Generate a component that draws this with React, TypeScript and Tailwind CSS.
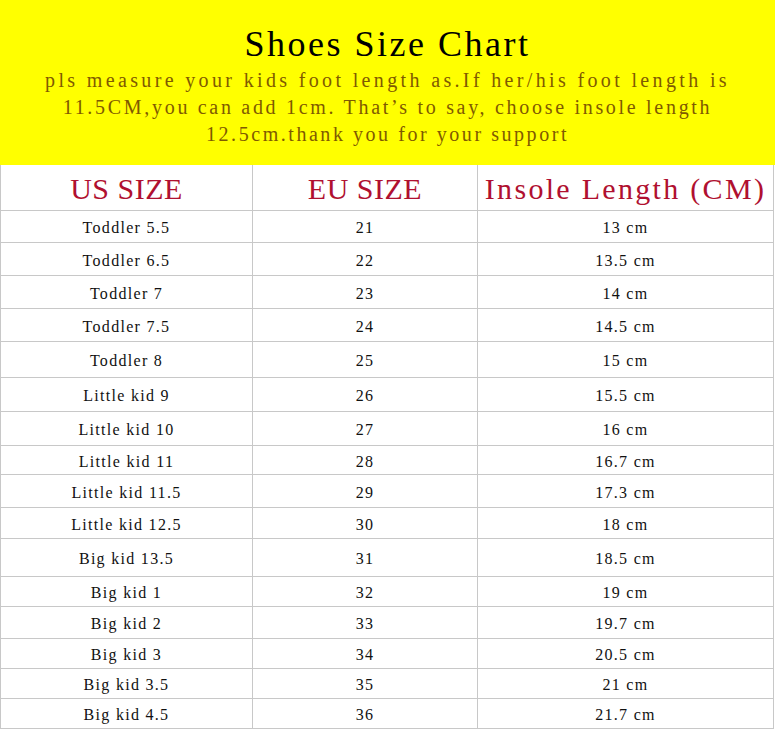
const rows: [string, string, string, number][] = [
  ['Toddler 5.5', '21', '13 cm', 32],
  ['Toddler 6.5', '22', '13.5 cm', 33],
  ['Toddler 7', '23', '14 cm', 33],
  ['Toddler 7.5', '24', '14.5 cm', 33],
  ['Toddler 8', '25', '15 cm', 36],
  ['Little kid 9', '26', '15.5 cm', 34],
  ['Little kid 10', '27', '16 cm', 34],
  ['Little kid 11', '28', '16.7 cm', 29],
  ['Little kid 11.5', '29', '17.3 cm', 33],
  ['Little kid 12.5', '30', '18 cm', 31],
  ['Big kid 13.5', '31', '18.5 cm', 38],
  ['Big kid 1', '32', '19 cm', 30],
  ['Big kid 2', '33', '19.7 cm', 32],
  ['Big kid 3', '34', '20.5 cm', 30],
  ['Big kid 3.5', '35', '21 cm', 30],
  ['Big kid 4.5', '36', '21.7 cm', 30],
];

const serif = "font-['Liberation_Serif',serif]";

export default function App() {
  return (
    <main className={`w-[775px] min-h-[731px] bg-white ${serif}`}>
      <header className="flex h-[165px] flex-col items-center bg-[#ffff00] pt-[24px]">
        <h1 className="text-[36px] leading-[40px] tracking-[2.5px] text-black">Shoes Size Chart</h1>
        <div className="mt-[3px] flex flex-col items-center text-[20px] leading-[27px] text-[#7f5a00] whitespace-nowrap">
          <p className="tracking-[3.35px]">pls measure your kids foot length as.If her/his foot length is</p>
          <p className="tracking-[2.7px]">11.5CM,you can add 1cm. That’s to say, choose insole length</p>
          <p className="tracking-[2.55px]">12.5cm.thank you for your support</p>
        </div>
      </header>

      <div className="grid w-[774px] grid-cols-[252px_225px_296px] border-l border-[#c8c8c8] text-[#b01030]">
        <div className="flex h-[46px] items-center justify-center border-r border-b border-[#c8c8c8] pt-[2px] text-[30px] tracking-[0.5px]">
          US SIZE
        </div>
        <div className="flex h-[46px] items-center justify-center border-r border-b border-[#c8c8c8] pt-[2px] text-[30px] tracking-[0.5px]">
          EU SIZE
        </div>
        <div className="flex h-[46px] items-center justify-center border-r border-b border-[#c8c8c8] pt-[2px] text-[30px] tracking-[2.3px]">
          Insole Length (CM)
        </div>

        {rows.map(([us, eu, insole, h]) => (
          <div key={us} className="contents text-[16px] tracking-[1.3px] text-[#111]">
            <div className="flex items-center justify-center border-r border-b border-[#c8c8c8] pt-[3px]" style={{ height: h }}>
              {us}
            </div>
            <div className="flex items-center justify-center border-r border-b border-[#c8c8c8] pt-[3px]" style={{ height: h }}>
              {eu}
            </div>
            <div className="flex items-center justify-center border-r border-b border-[#c8c8c8] pt-[3px]" style={{ height: h }}>
              {insole}
            </div>
          </div>
        ))}
      </div>
    </main>
  );
}
